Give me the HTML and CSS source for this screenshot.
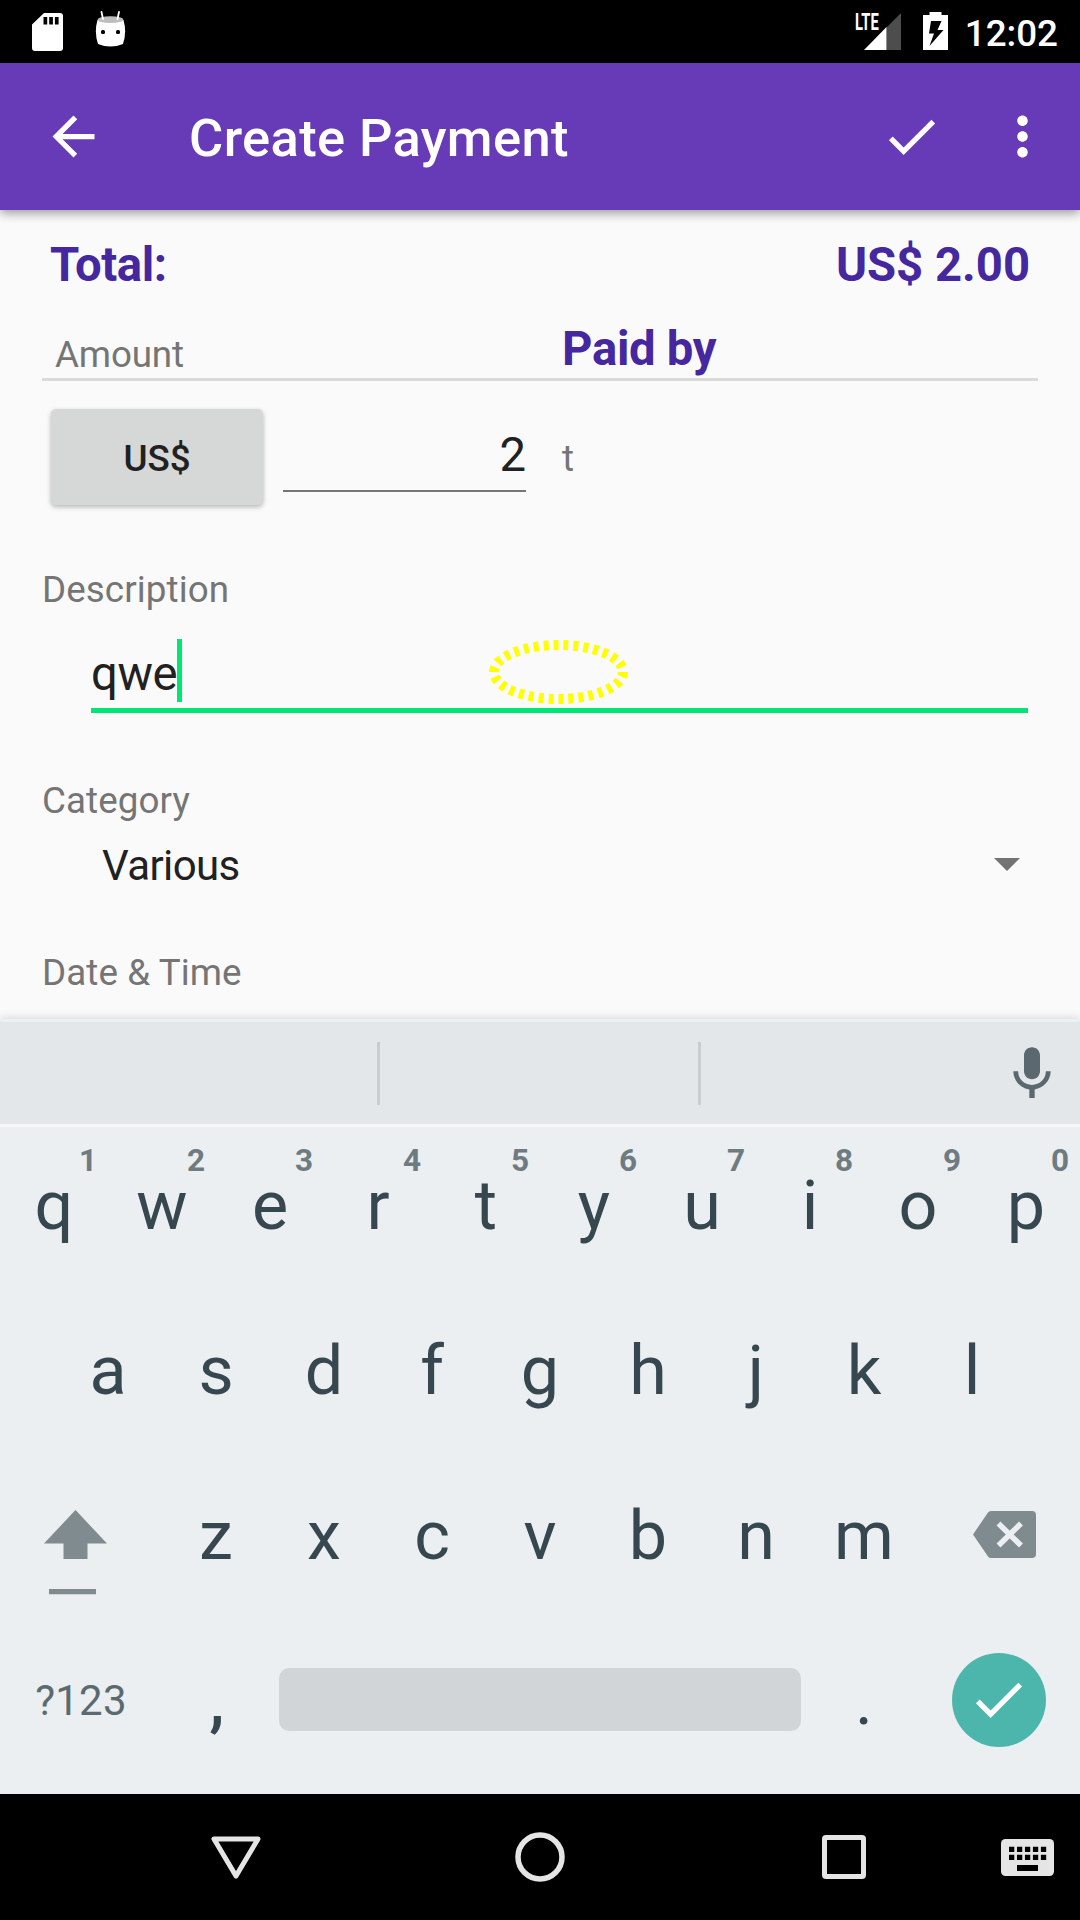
FILE: index.html
```html
<!DOCTYPE html>
<html lang="en">
<head>
<meta charset="utf-8">
<title>Create Payment</title>
<link rel="stylesheet" href="styles.css">
</head>
<body>
<header class="status-bar">
  <svg class="status-sd" viewBox="0 0 31 38" width="31" height="38"><path fill="#fff" fill-rule="evenodd" d="M12 0H28Q31 0 31 3V35Q31 38 28 38H3Q0 38 0 35V11.5ZM11.500 4V11.500H15.200V4ZM17.200 4V11.500H20.900V4ZM22.900 4V11.500H26.600V4Z"/></svg>
  <svg class="status-droid" viewBox="0 0 31 36" width="31" height="36"><path fill="#fff" d="M2.500 9H28.500Q32 21 28 33Q15.500 38 3 33Q-1 21 2.500 9Z"/><ellipse cx="15.500" cy="8.700" rx="12.800" ry="3.400" fill="#bdbdbd"/><path d="M6.500 1L8 8M24 1L22.500 8" stroke="#fff" stroke-width="1.800" stroke-linecap="round"/><rect x="6" y="19" width="4" height="4" rx="1.500"/><rect x="21" y="19" width="4" height="4" rx="1.500"/></svg>
  <span class="status-gap"></span>
  <div class="signal">
    <svg viewBox="0 0 37 37" width="37" height="37"><path fill="#4d4d4d" d="M22.500 14.500L37 0V37H22.500Z"/><path fill="#fff" d="M0 37L22.500 14V37Z"/></svg>
    <span class="signal-type">LTE</span>
  </div>
  <svg class="battery" viewBox="0 0 25 38" width="25" height="38"><path fill="#fff" fill-rule="evenodd" d="M6.500 0H18.500V3H25V38H0V3H6.500ZM8 9L6 21.500H11L6.500 34L20.500 18H14.500L18.500 9Z"/></svg>
  <time class="clock">12:02</time>
</header>
<nav class="app-bar">
  <svg class="icon" viewBox="0 0 24 24"><path d="M20 11H7.830l5.590-5.590L12 4l-8 8 8 8 1.410-1.410L7.830 13H20v-2z"/></svg>
  <h1 class="title">Create Payment</h1>
  <svg class="icon icon-done" viewBox="0 0 24 24"><path d="M9 16.170L4.830 12l-1.420 1.410L9 19 21 7l-1.410-1.410z"/></svg>
  <svg class="icon" viewBox="0 0 24 24"><path d="M12 8c1.100 0 2-.9 2-2s-.9-2-2-2-2 .9-2 2 .9 2 2 2zm0 2c-1.100 0-2 .9-2 2s.9 2 2 2 2-.9 2-2-.9-2-2-2zm0 6c-1.100 0-2 .9-2 2s.9 2 2 2 2-.9 2-2-.9-2-2-2z"/></svg>
</nav>
<main class="form">
  <div class="total"><span class="total-label">Total:</span><span>US$ 2.00</span></div>
  <div class="columns">
    <span class="label amount-head">Amount</span>
    <span class="paid-head">Paid by</span>
  </div>
  <div class="amount-row">
    <button class="currency">US$</button>
    <div class="amount-input">2</div>
    <span class="label payer">t</span>
  </div>
  <div class="label description-label">Description</div>
  <div class="description-input">
    <span>qwe</span><i class="caret"></i>
    <svg class="tap-mark" viewBox="0 0 139 64" width="139" height="64"><ellipse cx="69.500" cy="32" rx="64.500" ry="27" pathLength="300" fill="none" stroke="#ff0" stroke-width="10" stroke-dasharray="5 5"/></svg>
  </div>
  <div class="label category-label">Category</div>
  <div class="category"><span>Various</span><svg viewBox="0 0 26 13" width="26" height="13"><path fill="#737373" d="M0 0H26L13 13Z"/></svg></div>
  <div class="label date-label">Date &amp; Time</div>
</main>
<section class="keyboard">
  <div class="suggestions">
    <span></span><i></i><span></span><i></i>
    <svg class="mic" viewBox="0 0 24 24" width="64" height="64"><path fill="#5a686f" d="M12 14c1.660 0 3-1.340 3-3V5c0-1.660-1.340-3-3-3S9 3.340 9 5v6c0 1.660 1.340 3 3 3zm5.200-3c0 3-2.400 5.100-5.200 5.100S6.800 14 6.800 11H5c0 3.500 2.720 6.300 6 6.800V21h2v-3.200c3.280-.5 6-3.300 6-6.800z"/></svg>
  </div>
  <div class="keys">
    <div class="key">q<sup>1</sup></div><div class="key">w<sup>2</sup></div><div class="key">e<sup>3</sup></div><div class="key">r<sup>4</sup></div><div class="key">t<sup>5</sup></div><div class="key">y<sup>6</sup></div><div class="key">u<sup>7</sup></div><div class="key">i<sup>8</sup></div><div class="key">o<sup>9</sup></div><div class="key">p<sup>0</sup></div>
  </div>
  <div class="keys">
    <div class="key">a</div><div class="key">s</div><div class="key">d</div><div class="key">f</div><div class="key">g</div><div class="key">h</div><div class="key">j</div><div class="key">k</div><div class="key">l</div>
  </div>
  <div class="keys">
    <div class="key key-shift"><svg viewBox="0 0 63 85" width="63" height="85"><path fill="#808b8f" d="M31.500 0L63 33.500H43.500V49H19.500V33.500H0ZM5 79H52V84.200H5Z"/></svg></div>
    <div class="key">z</div><div class="key">x</div><div class="key">c</div><div class="key">v</div><div class="key">b</div><div class="key">n</div><div class="key">m</div>
    <div class="key key-delete"><svg viewBox="0 0 63 47" width="63" height="47"><path fill="#808b8f" d="M18 0H59Q63 0 63 4V43Q63 47 59 47H18Q16 47 15 45.500L0 23.500L15 1.500Q16 0 18 0Z"/><path d="M25.500 12.500L48 34.500M48 12.500L25.500 34.500" stroke="#ebeff2" stroke-width="5.500"/></svg></div>
  </div>
  <div class="keys">
    <div class="key key-symbols">?123</div>
    <div class="key key-comma">,</div>
    <div class="space"></div>
    <div class="key">.</div>
    <div class="key key-enter"><span class="enter"><svg viewBox="0 0 24 24" width="63" height="63"><path fill="#fff" d="M9 16.170L4.830 12l-1.420 1.410L9 19 21 7l-1.410-1.410z"/></svg></span></div>
  </div>
</section>
<footer class="nav-bar">
  <svg class="nav-back" viewBox="0 0 50 43" width="50" height="43"><path fill="none" stroke="#e5e5e5" stroke-width="5" stroke-linejoin="round" d="M3 3H47L25 40Z"/></svg>
  <svg class="nav-home" viewBox="0 0 50 50" width="50" height="50"><circle cx="25" cy="25" r="22" fill="none" stroke="#e5e5e5" stroke-width="5.500"/></svg>
  <svg class="nav-recents" viewBox="0 0 44 44" width="44" height="44"><rect x="2.500" y="2.500" width="39" height="39" rx="1.500" fill="none" stroke="#e5e5e5" stroke-width="5"/></svg>
  <svg class="nav-ime" viewBox="0 0 53 37" width="53" height="37"><rect width="53" height="37" rx="4.500" fill="#e5e5e5"/><path stroke="#000" stroke-width="5.300" stroke-dasharray="5.300 2.670" d="M8 10.400H45.500M8 18.300H45.500"/><path d="M16 26H37V32H16Z"/></svg>
</footer>
</body>
</html>
```
FILE: styles.css
```css
* { box-sizing: border-box; }
body {
  margin: 0;
  width: 1080px;
  height: 1920px;
  display: flex;
  flex-direction: column;
  overflow: hidden;
  background: #fafafa;
  color: #212121;
  font-family: Roboto, sans-serif;
}
svg { display: block; flex: none; }

.status-bar {
  height: 63px;
  padding: 0 21px 0 32px;
  display: flex;
  align-items: flex-start;
  background: #000;
  color: #fff;
}
.status-sd { margin-top: 13px; }
.status-droid { margin: 11px 0 0 32px; }
.status-gap { flex: 1; }
.signal { position: relative; margin: 13px 22px 0 0; }
.signal-type {
  position: absolute;
  left: -9px;
  top: -1px;
  font-size: 23px;
  line-height: 22px;
  font-weight: 700;
  transform: scaleX(.64);
  transform-origin: left;
}
.battery { margin-top: 12px; }
.clock {
  margin: 0 1px 0 17px;
  font-size: 36.75px;
  line-height: 67px;
  font-weight: 500;
}

.app-bar {
  position: relative;
  height: 147px;
  padding: 0 26px 0 42px;
  display: flex;
  align-items: center;
  background: #673ab7;
  color: #fff;
  box-shadow: 0 3px 10px rgba(0, 0, 0, .4);
}
.icon { width: 63px; height: 63px; fill: #fff; }
.icon-done { margin: 0 48px 1px 0; }
.title {
  flex: 1;
  margin: 3px 0 0 84px;
  font-size: 52.5px;
  line-height: 60px;
  font-weight: 500;
  letter-spacing: .36px;
}

.form { height: 809px; padding: 30px 42px 0; }
.label { color: #757575; font-size: 36.75px; line-height: 50px; letter-spacing: .1px; }
.total {
  display: flex;
  justify-content: space-between;
  padding: 0 8px;
  color: #4527a0;
  font-size: 47.25px;
  line-height: 50px;
  font-weight: 700;
}
.total-label { letter-spacing: -.4px; }
.columns {
  display: flex;
  height: 91px;
  border-bottom: 3px solid #dadada;
}
.amount-head { width: 520px; padding: 40px 0 0 13px; letter-spacing: -.15px; }
.paid-head {
  padding-top: 34px;
  color: #4527a0;
  font-size: 47.25px;
  line-height: 50px;
  font-weight: 700;
  letter-spacing: -.3px;
}
.amount-row {
  display: flex;
  align-items: flex-start;
  height: 125px;
  padding: 28px 0 0 9px;
}
.currency {
  width: 212px;
  height: 96px;
  padding: 3px 0 0;
  border: 0;
  border-radius: 5px;
  background: #d6d7d7;
  color: #212121;
  font: 500 36.75px/50px Roboto, sans-serif;
  box-shadow: 0 2px 5px rgba(0, 0, 0, .28);
}
.amount-input {
  width: 243px;
  margin-left: 20px;
  padding: 21px 0 10px 0;
  border-bottom: 2px solid #757575;
  font-size: 47.25px;
  line-height: 50px;
  text-align: right;
}
.payer { padding: 25px 0 0 36px; }
.description-label { margin-top: 59px; }
.description-input {
  position: relative;
  display: flex;
  height: 75px;
  margin: 23px 10px 0 49px;
  border-bottom: 5px solid #00e676;
  font-size: 47.25px;
  line-height: 72px;
  letter-spacing: -.4px;
}
.caret { width: 5px; height: 63px; margin: 1px 0 0; background: #00e676; }
.tap-mark { position: absolute; left: 398px; top: 2px; }
.category-label { margin-top: 63px; }
.category {
  display: flex;
  align-items: center;
  justify-content: space-between;
  margin-top: 15px;
  padding: 0 18.500px 0 60px;
  font-size: 42px;
  line-height: 50px;
  letter-spacing: -.6px;
}
.category svg { margin-bottom: 3px; }
.date-label { margin-top: 57px; }

.keyboard {
  position: relative;
  height: 775px;
  background: #ebeff2;
  color: #37474f;
  box-shadow: 0 -2px 8px rgba(0, 0, 0, .12);
}
.suggestions {
  display: flex;
  align-items: center;
  height: 108px;
  border-top: 3px solid #edf0f1;
  border-bottom: 3px solid #f5f7f9;
  background: #e3e7ea;
}
.suggestions span { width: 377px; }
.suggestions i { width: 3px; height: 63px; background: #c9cdd0; }
.suggestions i + span { width: 318px; }
.mic { margin: 2px 0 0 299px; }
.keys { display: flex; justify-content: center; height: 165px; }
.key {
  position: relative;
  width: 108px;
  font-size: 68.25px;
  line-height: 159px;
  text-align: center;
}
.key sup {
  position: absolute;
  left: 79px;
  top: 18px;
  font-size: 31.500px;
  line-height: 32px;
  font-weight: 700;
  color: #6e7b80;
}
.key-shift { width: 162px; padding: 53px 0 0 44px; }
.key-delete { width: 162px; padding: 54px 0 0 55px; }
.key-symbols {
  width: 162px;
  font-size: 42px;
  line-height: 157px;
  letter-spacing: .2px;
  color: #5b6a70;
}
.key-comma { padding-left: 2px; font-weight: 500; }
.space {
  width: 522px;
  height: 63px;
  margin: 46px 9px 0;
  border-radius: 10px;
  background: #d1d5d8;
}
.key-enter { width: 162px; padding: 31px 0 0 34px; }
.enter {
  display: grid;
  place-items: center;
  width: 94px;
  height: 94px;
  border-radius: 50%;
  background: #4db6ac;
}
.enter svg { margin: 0 2px 1px 0; }

.nav-bar {
  position: relative;
  display: flex;
  align-items: center;
  height: 126px;
  background: #000;
}
.nav-back { margin-left: 211px; }
.nav-home { margin-left: 254px; }
.nav-recents { margin-left: 257px; }
.nav-ime { margin: 1px 0 0 135px; }
```
